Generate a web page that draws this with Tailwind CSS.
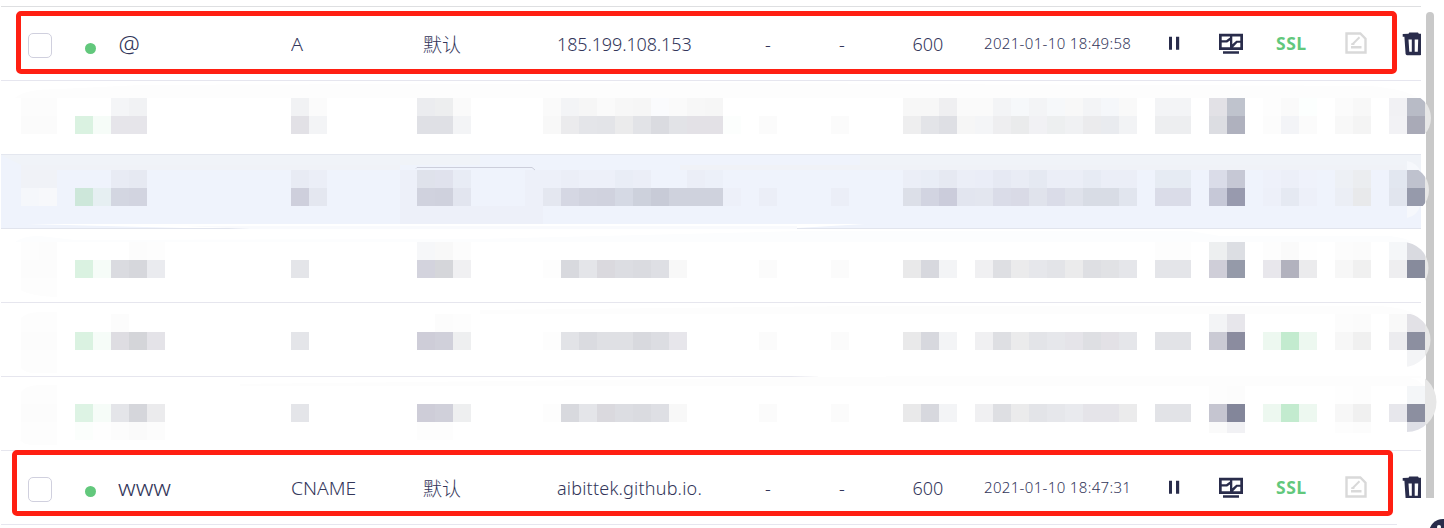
<!DOCTYPE html>
<html lang="zh-CN">
<head>
<meta charset="utf-8">
<title>DNS 解析记录</title>
<script src="https://cdn.jsdelivr.net/npm/@tailwindcss/browser@4"></script>
</head>
<body class="bg-white">
<svg class="hidden">
  <symbol id="pause" viewBox="0 0 12 14"><path fill="#292c4b" d="M1 .7h3v13H1zM8 .7h3.200v13H8z"/></symbol>
  <symbol id="monitor" viewBox="0 0 24 21"><path fill="#292c4b" d="M0 .7h24V17H0zM4 18.200h16v2.500H4z"/><path fill="#fff" d="M2.700 3.500h8.300v1L7.200 7.300H2.700zM2.700 9.500h5.500L11 7.500v6.800H2.700zM13.300 3.500h8v4.200h-4l-4 3.600zM21.300 9.800v4.500h-7.200l4.200-4.500z"/></symbol>
  <symbol id="note" viewBox="0 0 22 22"><path fill="none" stroke="#d9d9d9" stroke-width="2.400" d="M1.500 1.500h13.800l5.200 5.200v13.800h-19z"/><path fill="none" stroke="#d9d9d9" stroke-width="2" d="M7.500 12.300l7-7"/><path fill="#d9d9d9" d="M6.200 11.300h3.200v1.700H6.200zM6 14h10.500v2.600H6z"/></symbol>
  <symbol id="trash" viewBox="0 0 19 24"><path fill="#292c4b" d="M7.300.5h8.700l.8 1.200H24v3H.7V1.900L6.500 1.700zM2.400 4.700h18v16a2.500 2.500 0 0 1-2.500 2.500H5A1.600 1.600 0 0 1 3.600 22z"/><path fill="#fff" d="M6.500 7.500h3.300v12.300H7.300zM12.700 7.500h3.500l-.4 12.300h-3.100z"/></symbol>
</svg>

<main class="relative flex h-[528px] w-[1444px] overflow-hidden bg-white pl-px font-['Noto_Sans','Noto_Sans_CJK_SC',sans-serif] text-[#33365a]">
  <section class="relative z-10 w-[1420px] shrink-0 pt-[6px]">
    <div class="h-px bg-[#dedfe1]"></div>

    <div class="relative grid h-[74px] grid-cols-[27px_56px_34px_173px_132px_134px_208px_74px_73px_72px_184px_51px_57px_69px_57px_19px] border-b border-[#e6e6ef]">
      <div class="absolute top-[4px] left-[15px] h-[63px] w-[1381px] rounded-[5px] border-[5px] border-[#ff1f12]"></div>
      <span></span>
      <span class="mt-[26px] size-[24px] h-[25px] rounded-[5px] border border-[#d0d0de]"></span>
      <span class="mt-[35.500px] ml-[0.500px] size-[11px] rounded-full bg-[#62c87c]"></span>
      <span class="mt-[22px] pl-[0.500px] text-[24px] leading-[30px] font-light">@</span>
      <span class="mt-[22px] text-[18px] leading-[30px] font-light"><span class="inline-block origin-left scale-x-110">A</span></span>
      <span class="mt-[22px] font-['Noto_Sans_CJK_SC'] text-[19px] leading-[30px] font-light">默认</span>
      <span class="mt-[22px] text-[18px] leading-[30px] font-light tracking-[-0.130px]">185.199.108.153</span>
      <span class="mt-[22px] text-[18px] leading-[30px] font-light">-</span>
      <span class="mt-[22px] text-[18px] leading-[30px] font-light">-</span>
      <span class="mt-[22px] pl-[0.500px] text-[18px] leading-[30px] font-light">600</span>
      <span class="mt-[21px] text-[15px] leading-[30px] font-light tracking-[0.340px] whitespace-nowrap">2021-01-10 18:49:58</span>
      <svg class="mt-[29px] h-[14px] w-[12px]"><use href="#pause"/></svg>
      <svg class="mt-[26px] h-[21px] w-[24px]"><use href="#monitor"/></svg>
      <span class="mt-[21px] font-['Open_Sans'] text-[17.500px] leading-[30px] font-bold tracking-[0.500px] text-[#62c87c]">SSL</span>
      <svg class="mt-[25px] h-[22px] w-[22px]"><use href="#note"/></svg>
      <svg class="mt-[25px] h-[24px] w-[19px] overflow-hidden"><use href="#trash"/></svg>
    </div>

    <div class="h-[74px] border-b border-[#e4e7ef]"><svg class="block h-[73px] w-[1420px] overflow-visible" viewBox="1 81 1420 73" data-row="0"></svg></div>
    <div class="h-[74px] border-b border-[#e1e4ed] bg-[#eff3fc]"><svg class="block h-[73px] w-[1420px] overflow-visible" viewBox="1 155 1420 73" data-row="1"></svg></div>
    <div class="h-[74px] border-b border-[#e6e6ee]"><svg class="block h-[73px] w-[1420px] overflow-visible" viewBox="1 229 1420 73" data-row="2"></svg></div>
    <div class="h-[74px] border-b border-[#e6e6ee]"><svg class="block h-[73px] w-[1420px] overflow-visible" viewBox="1 303 1420 73" data-row="3"></svg></div>
    <div class="h-[74px] border-b border-[#e6e6ee]"><svg class="block h-[73px] w-[1420px] overflow-visible" viewBox="1 377 1420 73" data-row="4"></svg></div>

    <div class="relative grid h-[74px] grid-cols-[27px_56px_34px_173px_132px_134px_208px_74px_73px_72px_184px_51px_57px_69px_57px_19px]">
      <div class="absolute -top-px left-[11px] h-[66px] w-[1381px] rounded-[5px] border-[5px] border-[#ff1f12]"></div>
      <div class="absolute top-[73px] left-0 h-px w-[1396px] bg-[#e6e6ef]"></div>
      <span></span>
      <span class="mt-[26px] size-[24px] h-[25px] rounded-[5px] border border-[#d0d0de]"></span>
      <span class="mt-[35px] ml-[0.500px] size-[11px] rounded-full bg-[#62c87c]"></span>
      <span class="mt-[21px] text-[22px] leading-[30px] font-light"><span class="inline-block origin-left scale-x-[1.090]">www</span></span>
      <span class="mt-[22px] text-[18px] leading-[30px] font-light"><span class="inline-block origin-left scale-x-[1.070]">CNAME</span></span>
      <span class="mt-[22px] font-['Noto_Sans_CJK_SC'] text-[19px] leading-[30px] font-light">默认</span>
      <span class="mt-[22px] text-[18px] leading-[30px] font-light tracking-[0.200px]">aibittek.github.io.</span>
      <span class="mt-[22px] text-[18px] leading-[30px] font-light">-</span>
      <span class="mt-[22px] text-[18px] leading-[30px] font-light">-</span>
      <span class="mt-[22px] pl-[0.500px] text-[18px] leading-[30px] font-light">600</span>
      <span class="mt-[21px] text-[15px] leading-[30px] font-light tracking-[0.340px] whitespace-nowrap">2021-01-10 18:47:31</span>
      <svg class="mt-[29px] h-[14px] w-[12px]"><use href="#pause"/></svg>
      <svg class="mt-[26px] h-[21px] w-[24px]"><use href="#monitor"/></svg>
      <span class="mt-[21px] font-['Open_Sans'] text-[17.500px] leading-[30px] font-bold tracking-[0.500px] text-[#62c87c]">SSL</span>
      <svg class="mt-[25px] h-[22px] w-[22px]"><use href="#note"/></svg>
      <div class="mt-[25px] h-[22px] w-[19px] overflow-hidden"><svg class="h-[24px] w-[19px]"><use href="#trash"/></svg></div>
    </div>
  </section>
  <div class="mt-[12px] ml-[5px] h-[486px] w-[8px] shrink-0 rounded-t-[4px] bg-[#c9c9c9]"></div>
  <div class="absolute top-[519px] left-[1429px] size-[28px] rounded-full bg-[#292c4b]"><div class="mt-[6px] ml-[8px] size-[4px] rounded-full bg-white"></div></div>
</main>

<script>
// Mosaic blocks hiding private records: [top, "firstColumn:colour,colour,..."] on an 18px grid.
const rows = [
 {cap:[1407,118,24], under:'<path fill="#fdfdfd" d="M15 98Q24 89 60 89L140 85L700 83L1370 86Q1405 89 1418 98z"/>', lines:[
  [98,'0:fcfcfc,fcfcfc 5:f4f5f7,f1f2f4 15:f1f2f4,fbfbfb 22:ebecef,edeeef,fafafa 29:fafafa,f3f4f6,f6f6f6,fafafa,f7f7f7,f6f6f6,fafbfd,fafafa,f7f7f7,f6f6f6 49:f7f7f7,f7f7f7,efeff1,fafafa,fafafa,f3f4f6,f6f8fa,f3f4f6,f6f8fa,f8f8f8,f3f4f6,f5f7fa,f9f9f9 63:f3f4f6,f3f4f6 66:e2e1e6,bfc3cd 69:fdfdfd,fafafa,fcfffe 73:fbfbfb,f8f8f8 76:f1f1f4,b8bbc6'],
  [116,'0:fbfbfb,fbfbfb 3:daf2e1,f6fcf8,e6e5ea,e6e5ea 15:e2e1e6,f3f4f6 22:dfe0e5,dfe0e5,f3f4f6 29:f8f8f8,ebebed,e4e5e9,e3e4e8,ebebec,e2e3e7,dadbe0,e2e3e7,e3e1e6,e3e1e6,fcfefd 41:fbfbfb 45:fbfbfb 49:eeeeef,e3e4e8,dedfe4,f6f6f6,f4f5f7,eeeef0,eaebec,f1f1f4,edeff0,f0f1f3,ebebed,e9ebef,f2f3f5 63:edeef0,edeef0 66:dcdde2,afb1be 69:fcfcfc,f3f4f7,fbfbfb 73:f8f8f8,f4f4f4 76:f2f2f5,a9aab7']]},
 {cap:[1405,190,24], under:'<path fill="#f0f3f8" d="M1 155H480V165H21zM860 155H1421V170H860z"/><path fill="#f0f2f7" d="M21 165H400V170H21zM680 165H1405V170H680z"/><path fill="#edf0f9" d="M400 170H543V224H400z"/><path fill="#eff3fc" d="M471 170H525V206H471z"/><path fill="#fff" d="M26 224L185 228H250V229H797V228L865 224z"/><path fill="#f9fafd" d="M185 226H797V229H250z"/><path fill="none" stroke="#cccedb" d="M416 168.500L417 167.500H532L535 170"/><path fill="#f6f8fc" d="M1407 161Q1416 163 1420 170V206Q1418 215 1407 218z"/>', lines:[
  [170,'0:f0f2f7,f0f2f7 5:e8ebf4,e6e9f2 15:e8ebf4,ebeef7 22:dfe2eb,e0e2ed,e8ecf5 29:edf0f9,ebeef7,edf0f9,edf0f9,e9edf6,ebeef7,eff3fc,eff3fc,ebeef7,ecf0f9 49:ebeef7,e9edf6,e6e9f2,ebeef7,eaedf7,e6e9f3,e9ecf5,e5e9f2,ebeef7,ebeef7,e7ebf4,ebeef7,ebeef7 63:e6ebf3,e6ebf3 66:dadce8,c6c8d5 69:eef1fa,eceff8,eff2fb 73:edf0f5,ebedf0 76:e2e7f0,bfc2ce'],
  [188,'0:f5f7fb,f7f8fb 3:cde7da,e6eff2,d3d6e1,d2d4e0 15:cecfdc,e4e7f0 22:d0d2de,cfd1dd,e2e5ef 29:e4e7f0,d5d7e3,d1d3df,d0d2de,d5d9e4,cdd1dc,c8cbd7,cfd2dd,cfd2dd,cfd2dd,edf0f9 41:ebeef7 45:ebeef7 49:dcdfe8,d2d4e1,cbccdb,e2e5ef,e3e6ef,dadce8,d9dae6,e0e3ec,dadce8,dfe2eb,d8dce5,d8dce5,e1e5ee 63:dadce8,dadce8 66:c6c8d7,989aae 69:edf0f9,e5e9f2,edf0f9 73:ebeef5,e8e9eb 76:e1e5ee,969aab']]},
 {cap:[1402.5,268,26], under:'<path fill="#fcfdfe" d="M15 242Q25 235 40 236L75 240L480 239L800 231H1190L1220 236H1390Q1407 238 1412 242z"/><path fill="#fdfdfd" d="M21 242H57V297Q30 296 21 290z"/>', lines:[
  [242,'0:fdfdfd,fcfcfc 6:fcfcfc,fdfdfd 22:f6f7f9,f8f8f8,fcfcfc 63:fdfdfd,fdfdfd 66:edeff0,dcdee3 69:fdfdfd,fafafa,fefefe 73:fcfcfc,fbfbfb 76:f5f7f9,d9dae0'],
  [260,'0:fcfcfc,fcfcfc 3:daf2e1,f6fcf8,dadbe0,d6d7dc,eaebef 15:e4e5e9 22:d3d3dd,d5d6da,f0f0f2 29:fdfdfd,d8d9de,e4e5e9,dad9de,dcdde2,dadbe0,dedfe4,f8f8f8 41:fbfbfb 45:fbfbfb 49:e9e9ea,d7d8de,f3f4f6 53:f0f0f2,dedfe3,ebebec,e6e7eb,e3e4e8,ebebec,dedfe3,e1e2e5,e5e6ea 63:e4e5e9,e4e5e9 66:cfced8,959aa9 69:e8e7ec,b2b2be,ebebed 73:f7f7f7,f0f0f0 76:eeeef0,878b9c']]},
 {cap:[1403.5,340,27], under:'<path fill="#fdfdfd" d="M21 368V318Q27 312 40 312H57V373H35Q25 373 21 368zM480 314V310L860 306H1380Q1405 308 1414 314z"/>', lines:[
  [314,'5:fcfcfc 23:fcfcfc,fdfdfd 66:f3f4f6,e7e6eb 73:fcfcfc,fbfbfb 76:f9f9f9,e2e1e6'],
  [332,'0:fcfcfc,fcfcfc 3:daf2e1,f6fcf8,dedde2,d4d5d9,e4e3e8 15:e4e5e9 22:cecdd8,d0d0da,eeeff0 29:fdfdfd,e2e3e7,dadbe0,dfe0e4,dfe0e4,d8d9de,dcdde2,e7e6eb 41:fbfbfb 45:fbfbfb 49:e9e9ea,d7d8de,f3f4f6 53:f0f0f2,dedfe3,ebebec,e3e4e8,e6e7eb,e5e4e9,dedfe3,e3e1e6,e5e6ea 63:e2e3e7,e2e3e7 66:cacad4,8b8c9f 69:edf8f0,c3ebcf,edf8f0 73:f7f7f7,f0f0f0 76:ececef,8c8fa0'],
  [350,'77:f3f4f6']]},
 {cap:[1406.500,402,30], under:'<path fill="#fdfdfd" d="M21 440V392Q26 385 40 385H57V445H35Q23 445 20 440zM240 386V384L760 378L820 376H1400Q1418 378 1424 386z"/><path fill="#fff" d="M818 376H886V377H818z"/><path fill="#fdfdfd" d="M886 376H1421V378H886z"/>', lines:[
  [386,'66:fdfdfd,fcfcfc 73:fefefe,fdfdfd 77:f4f6f8'],
  [404,'0:fcfcfc,fcfcfc 3:ddf3e4,f6fcf8,e4e5e9,d5d6db,ebebed 15:e4e5e9 22:cecdd8,d0d0da,eeeff0 29:fdfdfd,d8d9de,e4e5e9,dad9de,dcdde2,dadbe0,dedfe4,f8f8f8 41:fbfbfb 45:fbfbfb 49:e9e9ea,d7d8de,f3f4f6 53:f0f0f2,dedfe3,ebebec,e3e4e8,e6e7eb,e9eaee,e5e4e9,e5e4e9,ebebec 63:e2e3e7,e2e3e7 66:c5c5d0,83869a 69:edf8f0,c3ebcf,edf8f0 73:f7f7f7,f0f0f0 76:e7e7ec,8c8fa0'],
  [422,'3:fbfefc,fefefe,fcfcfc,fafafa,fcfcfc 22:fdfdfd,fdfdfd 66:fafafa,f1f1f4 73:fdfdfd,fcfcfc 77:dedfe6']]}
];
document.querySelectorAll('[data-row]').forEach(svg => {
  const i = +svg.dataset.row, r = rows[i], [cx, cy, rad] = r.cap;
  let cells = '', tail = '';
  for (const [y, line] of r.lines) for (const run of line.split(' ')) {
    const [start, colours] = run.split(':');
    colours.split(',').forEach((c, k) => {
      const col = +start + k;
      const h = y === 422 && col > 60 ? 11 : 18;
      const rect = `<rect x="${21 + col * 18}" y="${y}" width="18" height="${col === 77 ? 18 : h}" fill="#${c}"/>`;
      if (col === 77) tail += rect; else cells += rect;
    });
  }
  svg.innerHTML = `<defs><clipPath id="cap${i}"><circle cx="${cx}" cy="${cy}" r="${rad}"/></clipPath></defs>` + r.under +
    `<g shape-rendering="crispEdges">${cells}</g><g clip-path="url(#cap${i})"><rect x="1425" y="${cy - 40}" width="14" height="80" fill="#e7e7e7"/>${tail}</g>`;
});
</script>
</body>
</html>
